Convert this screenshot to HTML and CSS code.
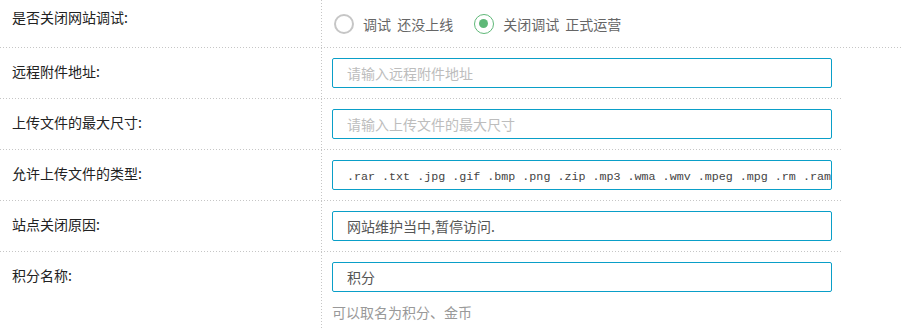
FILE: index.html
```html
<!DOCTYPE html>
<html lang="zh-CN">
<head>
<meta charset="utf-8">
<title>网站设置</title>
<link rel="stylesheet" href="styles.css">
</head>
<body>
<div class="form">
  <div class="row row-first">
    <div class="label">是否关闭网站调试:</div>
    <div class="field radios">
      <label class="radio"><span class="dot"></span><span class="radio-text">调试 还没上线</span></label>
      <label class="radio checked"><span class="dot"></span><span class="radio-text">关闭调试 正式运营</span></label>
    </div>
  </div>
  <div class="row">
    <div class="label">远程附件地址:</div>
    <div class="field"><input class="input" type="text" placeholder="请输入远程附件地址"></div>
  </div>
  <div class="row">
    <div class="label">上传文件的最大尺寸:</div>
    <div class="field"><input class="input" type="text" placeholder="请输入上传文件的最大尺寸"></div>
  </div>
  <div class="row">
    <div class="label">允许上传文件的类型:</div>
    <div class="field"><input class="input mono" type="text" value=".rar .txt .jpg .gif .bmp .png .zip .mp3 .wma .wmv .mpeg .mpg .rm .ram"></div>
  </div>
  <div class="row">
    <div class="label">站点关闭原因:</div>
    <div class="field"><input class="input" type="text" value="网站维护当中,暂停访问."></div>
  </div>
  <div class="row">
    <div class="label">积分名称:</div>
    <div class="field">
      <input class="input" type="text" value="积分">
      <div class="hint">可以取名为积分、金币</div>
    </div>
  </div>
</div>
</body>
</html>
```
FILE: styles.css
```css
html, body {
  margin: 0;
  padding: 0;
  background: #fff;
}

body {
  font-family: "Noto Sans CJK SC", "Noto Sans", sans-serif;
  font-size: 14px;
  color: #333;
}

.form {
  width: 902px;
}

.row {
  display: flex;
  width: 842px;
  padding-bottom: 1px;
  background: repeating-linear-gradient(to right, #c6c6c6 0 1px, transparent 1px 3px) left bottom / 100% 1px no-repeat;
}

.row-first {
  width: 902px;
  height: 47px;
}

.label {
  flex: 0 0 322px;
  box-sizing: border-box;
  padding: 13px 0 0 12px;
  line-height: 20px;
  color: #222;
  background: repeating-linear-gradient(to bottom, #c6c6c6 0 1px, transparent 1px 3px) right top / 1px 100% no-repeat;
}

.row-first .label {
  padding-top: 7px;
}

.field {
  flex: 1;
  padding: 10px 0 10px 10px;
}

.radios {
  display: flex;
  align-items: center;
  padding: 0 0 0 12px;
  height: 47px;
  box-sizing: border-box;
}

.radio {
  display: flex;
  align-items: center;
  margin-right: 21px;
  color: #666;
  line-height: 20px;
}

.dot {
  box-sizing: border-box;
  width: 20px;
  height: 20px;
  border: 2px solid #c6c6c6;
  border-radius: 50%;
  margin-right: 9px;
  position: relative;
}

.radio.checked .dot {
  border: 1.5px solid #5fb878;
}

.radio.checked .dot::after {
  content: "";
  position: absolute;
  left: 4px;
  top: 4px;
  width: 9px;
  height: 9px;
  border-radius: 50%;
  background: #5fb878;
}

.radio-text {
  word-spacing: 3px;
}

.input {
  display: block;
  box-sizing: border-box;
  width: 500px;
  height: 30px;
  margin: 0;
  padding: 0 14px;
  border: 1px solid #0a9fc8;
  border-radius: 2px;
  outline: none;
  font-family: "Noto Sans CJK SC", "Noto Sans", sans-serif;
  font-size: 14px;
  color: #555;
  background: #fff;
}

.input::placeholder {
  color: #bdbdbd;
}

.input.mono {
  font-family: "Liberation Mono", monospace;
  font-size: 11.7px;
  padding: 3px 0 0 14px;
  color: #444;
}

.hint {
  margin-top: 10px;
  line-height: 20px;
  color: #999;
}
```
